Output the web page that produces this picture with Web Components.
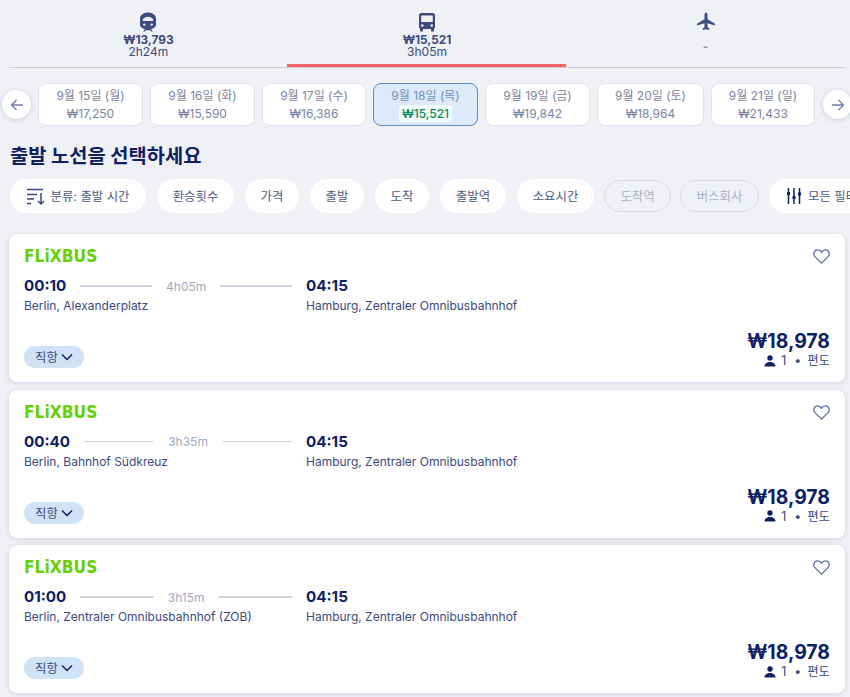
<!DOCTYPE html>
<html lang="ko">
<head>
<meta charset="utf-8">
<title>출발 노선</title>
<style>
  html, body { margin: 0; height: 697px; overflow: hidden; background: #f0f1f6; }
  body { font-family: "Inter", "Noto Sans CJK KR", sans-serif; color: #0e2163; }
</style>
</head>
<body>
<search-page>
  <mode-tabs>
    <mode-tab price="₩13,793" time="2h24m"><svg viewBox="0 0 20 20" width="20" height="20"><path fill="#3c4a7d" d="M10 .5C5.600.5 2 3 2 6.500v6C2 15 4.500 16.800 7 16.900L5.200 19.500h1.700l.8-1.200h4.600l.8 1.200h1.700L13 16.900c2.500-.1 5-1.900 5-4.400v-6C18 3 14.400.5 10 .5zM4.700 8c.3-1.800 2.800-3.200 5.300-3.200S15 6.200 15.300 8c.1.600-.3 1-.8 1h-9c-.5 0-.9-.4-.8-1zM6.300 13.800a1.200 1.200 0 1 1 0-2.400 1.200 1.200 0 0 1 0 2.400zm7.400 0a1.200 1.200 0 1 1 0-2.400 1.200 1.200 0 0 1 0 2.400z"/></svg></mode-tab>
    <mode-tab price="₩15,521" time="3h05m" active><svg viewBox="0 0 20 20" width="20" height="20"><path fill="#3c4a7d" d="M4.500 1h11C17.400 1 18 2.200 18 3.500V15c0 .8-.4 1.400-1 1.700V18.500c0 .6-.4 1-1 1h-1c-.6 0-1-.4-1-1V17H6v1.500c0 .6-.4 1-1 1H4c-.6 0-1-.4-1-1v-1.800c-.6-.3-1-.9-1-1.700V3.500C2 2.200 2.600 1 4.500 1zM4.200 4v5.500c0 .3.200.5.500.5h10.600c.3 0 .5-.2.500-.5V4c0-.3-.2-.5-.5-.5H4.700c-.3 0-.5.2-.5.500zM5.300 14.800a1.300 1.300 0 1 0 0-2.600 1.300 1.300 0 0 0 0 2.600zm9.400 0a1.300 1.300 0 1 0 0-2.600 1.300 1.300 0 0 0 0 2.600z"/></svg></mode-tab>
    <mode-tab time="-" muted><svg viewBox="0 0 20 20" width="20" height="20"><path fill="#3c4a7d" d="M10 .5c.9 0 1.500 1.300 1.500 2.500v4.200l7.500 4.600v1.800l-7.500-2.300v4l2 1.500v1.300L10 17.300l-3.500.8v-1.300l2-1.500v-4L1 13.600v-1.800l7.500-4.600V3C8.500 1.800 9.100.5 10 .5z"/></svg></mode-tab>
  </mode-tabs>
  <date-strip>
    <date-card date="9월 15일 (월)" price="₩17,250" style="width:105px"></date-card>
    <date-card date="9월 16일 (화)" price="₩15,590" style="width:105px"></date-card>
    <date-card date="9월 17일 (수)" price="₩16,386" style="width:104px"></date-card>
    <date-card date="9월 18일 (목)" price="₩15,521" style="width:105px" selected></date-card>
    <date-card date="9월 19일 (금)" price="₩19,842" style="width:105px"></date-card>
    <date-card date="9월 20일 (토)" price="₩18,964" style="width:107px"></date-card>
    <date-card date="9월 21일 (일)" price="₩21,433" style="width:104px"></date-card>
  </date-strip>
  <page-title>출발 노선을 선택하세요</page-title>
  <filter-bar>
    <filter-pill style="width:136px"><svg slot="icon" viewBox="0 0 18 18" width="18" height="18" fill="none" stroke="#3c4a7d" stroke-width="1.500"><path d="M0 2.500h16M0 7.500h10M0 12h7M0 16.500h4M14 6v11M11 14l3 3 3-3"/></svg>분류: 출발 시간</filter-pill>
    <filter-pill style="width:77px">환승횟수</filter-pill>
    <filter-pill style="width:54px">가격</filter-pill>
    <filter-pill style="width:54px">출발</filter-pill>
    <filter-pill style="width:54px">도착</filter-pill>
    <filter-pill style="width:66px">출발역</filter-pill>
    <filter-pill style="width:77px">소요시간</filter-pill>
    <filter-pill style="width:67px" disabled>도착역</filter-pill>
    <filter-pill style="width:79px" disabled>버스회사</filter-pill>
    <filter-pill style="width:110px;justify-content:flex-start;padding-left:17px"><svg slot="icon" viewBox="0 0 16 16" width="16" height="16" fill="#0e2163" stroke="#0e2163"><path fill="none" stroke-width="1.500" d="M2.500 0v16M8 0v16M13.500 0v16"/><rect x="1" y="4" width="3" height="3" stroke="none"/><rect x="6.500" y="8" width="3" height="3" stroke="none"/><rect x="12" y="4.500" width="3" height="3" stroke="none"/></svg>모든 필터</filter-pill>
  </filter-bar>
  <trip-list>
    <trip-card dep="00:10" arr="04:15" dur="4h05m" from="Berlin, Alexanderplatz" to="Hamburg, Zentraler Omnibusbahnhof" price="₩18,978"></trip-card>
    <trip-card dep="00:40" arr="04:15" dur="3h35m" from="Berlin, Bahnhof Südkreuz" to="Hamburg, Zentraler Omnibusbahnhof" price="₩18,978"></trip-card>
    <trip-card dep="01:00" arr="04:15" dur="3h15m" from="Berlin, Zentraler Omnibusbahnhof (ZOB)" to="Hamburg, Zentraler Omnibusbahnhof" price="₩18,978"></trip-card>
  </trip-list>
</search-page>

<script>
const FONT = '"Inter", "Noto Sans CJK KR", sans-serif';

function define(tag, css, html, setup) {
  customElements.define(tag, class extends HTMLElement {
    constructor() {
      super();
      const root = this.attachShadow({ mode: 'open' });
      root.innerHTML = `<style>${css}</style>${html}`;
    }
    connectedCallback() {
      if (setup) setup(this, this.shadowRoot);
    }
  });
}

const fill = (root, id, value) => { root.getElementById(id).textContent = value; };

define('search-page',
  `:host { display: block; width: 850px; height: 697px; overflow: hidden; position: relative; font-family: ${FONT}; }`,
  `<slot></slot>`);

define('mode-tabs',
  `:host { display: flex; margin: 0 5px 0 9px; height: 68px; border-bottom: 1px solid #c9ccd8; box-sizing: border-box; }`,
  `<slot></slot>`);

define('mode-tab',
  `:host { flex: 1; display: flex; flex-direction: column; align-items: center; padding-top: 12px; box-sizing: border-box; height: 67px; color: #3c4a7d; position: relative; }
   :host([active])::after { content: ""; position: absolute; left: -1px; right: 0; bottom: 0; height: 3px; background: #fd6365; }
   .icon { height: 20px; line-height: 0; }
   .price { font-size: 11.800px; font-weight: 700; line-height: 12px; margin-top: 2px; height: 12px; }
   .time { font-size: 12px; line-height: 12px; }
   :host([muted]) .price { display: none; }
   :host([muted]) .time { color: #8f96b0; font-weight: 700; margin-top: 9px; }`,
  `<div class="icon"><slot></slot></div><div class="price" id="price"></div><div class="time" id="time"></div>`,
  (el, root) => {
    fill(root, 'price', el.getAttribute('price') || '');
    fill(root, 'time', el.getAttribute('time'));
  });

define('date-strip',
  `:host { display: flex; gap: 7px; margin-top: 15px; padding-left: 38px; height: 43px; position: relative; }
   button { position: absolute; top: 7px; width: 29px; height: 29px; border: 0; padding: 0; border-radius: 50%; background: #fff; box-shadow: 0 1px 5px rgba(14,33,99,.18); display: flex; align-items: center; justify-content: center; }
   .prev { left: 2px; } .next { left: 823px; }`,
  `<button class="prev"><svg viewBox="0 0 14 14" width="14" height="14" fill="none" stroke="#6f7da8" stroke-width="1.300"><path d="M13 7H1.500M6.500 2 1.500 7l5 5"/></svg></button>
   <slot></slot>
   <button class="next"><svg viewBox="0 0 14 14" width="14" height="14" fill="none" stroke="#6f7da8" stroke-width="1.300"><path d="M1 7h11.500M7.500 2l5 5-5 5"/></svg></button>`);

define('date-card',
  `:host { display: flex; flex-direction: column; align-items: center; box-sizing: border-box; height: 43px; padding-top: 3px; background: #fff; border: 1px solid #dfe2ec; border-radius: 8px; font-size: 12px; color: #7c84a0; flex: none; }
   .date { line-height: 17px; }
   .price { line-height: 17px; margin-top: 1px; padding: 0 3px; border-radius: 3px; }
   :host([selected]) { background: #dceafa; border-color: #5b8cc9; }
   :host([selected]) .date { color: #6f8fc0; }
   :host([selected]) .price { background: #f2fbfa; color: #0d8a62; font-weight: 500; }`,
  `<div class="date" id="date"></div><div class="price" id="price"></div>`,
  (el, root) => {
    fill(root, 'date', el.getAttribute('date'));
    fill(root, 'price', el.getAttribute('price'));
  });

define('page-title',
  `:host { display: block; margin: 17px 0 0 10px; height: 26px; line-height: 26px; font-size: 19.800px; font-weight: 700; color: #0e2163; }`,
  `<slot></slot>`);

define('filter-bar',
  `:host { display: flex; gap: 11px; margin: 10px 0 0 10px; height: 34px; white-space: nowrap; }`,
  `<slot></slot>`);

define('filter-pill',
  `:host { display: flex; flex: none; align-items: center; justify-content: center; gap: 6px; height: 34px; box-sizing: border-box; border-radius: 17px; background: #fff; font-size: 12.400px; color: #4e5a82; }
   :host([disabled]) { background: transparent; border: 1px solid #d9dce7; color: #aab0c6; height: 32px; margin: 1px -1px 0; }
   .icon { line-height: 0; }
   slot[name=icon]::slotted(svg) { display: block; }`,
  `<span class="icon"><slot name="icon"></slot></span><slot></slot>`,
  (el, root) => {
    if (!el.querySelector('[slot=icon]')) root.querySelector('.icon').remove();
  });

define('trip-list',
  `:host { display: flex; flex-direction: column; gap: 7.500px; margin: 21px 0 0 9px; width: 836px; }`,
  `<slot></slot>`);

define('trip-card',
  `:host { display: flex; flex-direction: column; box-sizing: border-box; height: 148px; padding: 14px 15px 14px; background: #fff; border-radius: 8px; box-shadow: 0 1px 5px rgba(14,33,99,.16); flex: none; }
   .top { display: flex; justify-content: space-between; height: 16px; align-items: flex-start; }
   .logo { font-family: "DejaVu Sans", sans-serif; font-size: 15.500px; font-weight: 700; line-height: 16px; color: #68d000; transform: scaleY(1.13); transform-origin: left center; }
   .heart { margin-top: 1px; display: block; }
   .route { display: flex; margin-top: 14px; }
   .leg { display: flex; flex-direction: column; }
   .dep { width: 282px; }
   .line { display: flex; align-items: center; gap: 14px; width: 268px; height: 16px; }
   .line i { flex: 1; height: 1.500px; background: #cfd3e2; }
   .time { font-size: 15.200px; font-weight: 700; line-height: 16px; color: #0e2163; }
   .dur { font-size: 12px; color: #a0a7bf; }
   .stop { font-size: 12px; line-height: 15px; margin-top: 4px; color: #3c4a7d; }
   .bottom { margin-top: auto; display: flex; justify-content: space-between; align-items: flex-end; }
   .chip { display: flex; align-items: center; gap: 3px; height: 22px; width: 60px; box-sizing: border-box; padding-left: 11px; border-radius: 11px; background: #cfe2f6; font-size: 12.400px; color: #3c4a7d; }
   .fare { text-align: right; }
   .amount { font-size: 19.400px; font-weight: 700; line-height: 22px; margin-bottom: 1px; color: #0e2163; }
   .pax { display: flex; align-items: center; justify-content: flex-end; font-size: 12.400px; line-height: 15px; color: #3c4a7d; }
   .pax svg { margin-right: 5px; }
   .pax .dot { margin: 0 6px 0 8px; }`,
  `<div class="top">
     <div class="logo">FLiXBUS</div>
     <svg class="heart" viewBox="0 0 18 16" width="17" height="15" fill="none" stroke="#5b6a99" stroke-width="1.300"><path d="M9 15 2 8.200C-.2 6 .7 1 4.800 1 6.800 1 8.200 2 9 3.500 9.800 2 11.200 1 13.200 1c4.100 0 5 5 2.800 7.200z"/></svg>
   </div>
   <div class="route">
     <div class="leg dep">
       <div class="line"><span class="time" id="dep"></span><i></i><span class="dur" id="dur"></span><i></i></div>
       <div class="stop" id="from"></div>
     </div>
     <div class="leg">
       <div class="line"><span class="time" id="arr"></span></div>
       <div class="stop" id="to"></div>
     </div>
   </div>
   <div class="bottom">
     <div class="chip">직항<svg viewBox="0 0 12 8" width="12" height="8" fill="none" stroke="#0e2163" stroke-width="1.500"><path d="M1 1.500 6 6.500 11 1.500"/></svg></div>
     <div class="fare">
       <div class="amount" id="price"></div>
       <div class="pax"><svg viewBox="0 0 12 12" width="12" height="12" fill="#0e2163"><circle cx="6" cy="3" r="2.700"/><path d="M.5 11.500C.5 8.500 3 7 6 7s5.500 1.500 5.500 4.500z"/></svg><span>1</span><span class="dot">•</span><span>편도</span></div>
     </div>
   </div>`,
  (el, root) => {
    ['dep', 'arr', 'dur', 'from', 'to', 'price'].forEach(k => fill(root, k, el.getAttribute(k)));
  });
</script>
</body>
</html>
